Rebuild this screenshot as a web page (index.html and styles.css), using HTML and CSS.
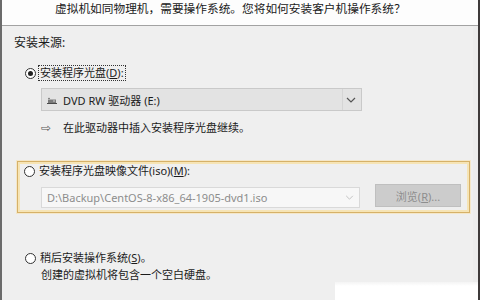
FILE: index.html
```html
<!DOCTYPE html>
<html lang="zh-CN">
<head>
<meta charset="utf-8">
<title>安装客户机操作系统</title>
<link rel="stylesheet" href="styles.css">
</head>
<body>
<div class="window">
  <div class="top">
    <p class="intro">虚拟机如同物理机，需要操作系统。您将如何安装客户机操作系统？</p>
  </div>
  <div class="main">
    <div class="section-title">安装来源:</div>

    <div class="radio-row first">
      <span class="radio checked"></span>
      <span class="label focus">安装程序光盘(<u>D</u>):</span>
    </div>

    <div class="combo">
      <span class="drive-icon">
        <svg width="10" height="7" viewBox="0 0 10 7"><path d="M1 2.5 L9 2.5 L9 6 L1 6 Z" fill="#7a7a7a"/><path d="M0 6 L10 6 L10 7 L0 7 Z" fill="#4a4a4a"/><rect x="6" y="3.5" width="2" height="1" fill="#cfcfcf"/><path d="M1 2 L2 0.5 L3 2 Z" fill="#555"/></svg>
      </span>
      <span class="combo-text">DVD RW 驱动器 (E:)</span>
      <span class="chevron">
        <svg width="10" height="6" viewBox="0 0 10 6"><path d="M1 1 L5 5 L9 1" fill="none" stroke="#555" stroke-width="1.2"/></svg>
      </span>
    </div>

    <div class="hint-row">
      <span class="arrow">⇨</span>
      <span>在此驱动器中插入安装程序光盘继续。</span>
    </div>

    <div class="iso-box">
      <div class="radio-row inbox">
        <span class="radio"></span>
        <span class="label">安装程序光盘映像文件(iso)(<u>M</u>):</span>
      </div>
      <div class="iso-row">
        <div class="combo disabled">
          <span class="combo-text">D:\Backup\CentOS-8-x86_64-1905-dvd1.iso</span>
          <span class="chevron">
            <svg width="9" height="5" viewBox="0 0 10 6"><path d="M1 1 L5 5 L9 1" fill="none" stroke="#c4c4c4" stroke-width="1.2"/></svg>
          </span>
        </div>
        <button class="browse" disabled>浏览(<u>R</u>)...</button>
      </div>
    </div>

    <div class="radio-row later">
      <span class="radio"></span>
      <span class="label">稍后安装操作系统(<u>S</u>)。</span>
    </div>
    <div class="desc">创建的虚拟机将包含一个空白硬盘。</div>
  </div>
  <div class="corner-patch"></div>
</div>
</body>
</html>
```

FILE: styles.css
```css
html, body {
  margin: 0;
  padding: 0;
}
body {
  width: 480px;
  height: 300px;
  overflow: hidden;
  font-family: "Noto Sans", "Noto Sans CJK SC", sans-serif;
  font-size: 11px;
  color: #1b1b1b;
}
.window {
  position: relative;
  width: 480px;
  height: 300px;
  box-sizing: border-box;
  border-left: 2px solid #6b6b6b;
  border-right: 2px solid #3e3a3a;
  background: #efefef;
  display: flex;
  flex-direction: column;
}
.top {
  height: 25px;
  background: #fdfdfd;
  border-bottom: 1px solid #a2a2a2;
  box-shadow: 0 1px 0 #f8f8f8;
  flex: none;
}
.intro {
  margin: 0;
  padding: 1px 0 0 53px;
  font-size: 11.7px;
  line-height: 14px;
  color: #202020;
}
.main {
  flex: 1;
  background: #efefef;
  box-shadow: inset -5px 0 0 #ececec;
  display: flex;
  flex-direction: column;
  align-items: flex-start;
}
.section-title {
  margin: 9px 0 0 12px;
  font-size: 12px;
  line-height: 16px;
}
.radio-row {
  display: flex;
  align-items: center;
  height: 16px;
  line-height: 16px;
}
.radio-row.first {
  margin: 14px 0 0 23px;
}
.radio {
  width: 9px;
  height: 9px;
  border: 1px solid #333;
  border-radius: 50%;
  background: #fff;
  margin-right: 3px;
  position: relative;
  flex: none;
}
.radio.checked::after {
  content: "";
  position: absolute;
  left: 2px;
  top: 2px;
  width: 5px;
  height: 5px;
  border-radius: 50%;
  background: #222;
}
.label {
  padding: 0 1px;
  line-height: 14px;
}
.label.focus {
  outline: 1px dotted #333;
}
.label u, .browse u {
  text-decoration: underline;
}
.combo {
  margin: 7px 0 0 39px;
  width: 321px;
  height: 23px;
  box-sizing: border-box;
  border: 1px solid #c9c9c9;
  background: #e3e3e3;
  display: flex;
  align-items: center;
}
.drive-icon {
  display: flex;
  margin: 1px 0 0 5px;
}
.combo-text {
  margin-left: 6px;
  flex: 1;
  white-space: nowrap;
}
.chevron {
  display: flex;
  width: 16px;
  height: 100%;
  align-items: center;
  justify-content: center;
  border-left: 1px solid #d5d5d5;
  margin-right: 2px;
}
.hint-row {
  margin: 9px 0 0 39px;
  height: 16px;
  line-height: 16px;
  display: flex;
  align-items: center;
}
.arrow {
  font-family: "DejaVu Sans", sans-serif;
  font-size: 12px;
  color: #555;
  margin-right: 12px;
}
.iso-box {
  margin: 25px 0 0 15px;
  width: 453px;
  height: 52px;
  box-sizing: border-box;
  border: 1px solid #d6b168;
  box-shadow: inset 0 0 0 2px #f6e4b5, 0 0 0 1px #f4e7c9;
  padding: 1px 0 0 6px;
  display: flex;
  flex-direction: column;
}
.radio-row.inbox {
  height: 14px;
  line-height: 14px;
  margin-top: 1px;
}
.iso-row {
  display: flex;
  align-items: flex-start;
  margin-top: 6px;
  margin-left: 17px;
}
.combo.disabled {
  margin: 3px 0 0 0;
  width: 319px;
  height: 21px;
  background: #f7f7f7;
  border: 1px solid #d9d9d9;
  color: #8d8d8d;
}
.combo.disabled .combo-text {
  margin-left: 5px;
}
.combo.disabled .chevron {
  border-left: none;
}
.browse {
  margin-left: 15px;
  width: 86px;
  height: 23px;
  border: 1px solid #bfbfbf;
  background: #cccccc;
  color: #8e8e8e;
  font-family: "Noto Sans", "Noto Sans CJK SC", sans-serif;
  font-size: 11px;
  padding: 0;
}
.radio-row.later {
  margin: 38px 0 0 23px;
  height: 14px;
  line-height: 14px;
}
.desc {
  margin: 3px 0 0 39px;
  line-height: 14px;
}
.corner-patch {
  position: absolute;
  left: 333px;
  top: 282px;
  width: 143px;
  height: 18px;
  background: linear-gradient(#f4f4f4, #ffffff 4px);
}
```
